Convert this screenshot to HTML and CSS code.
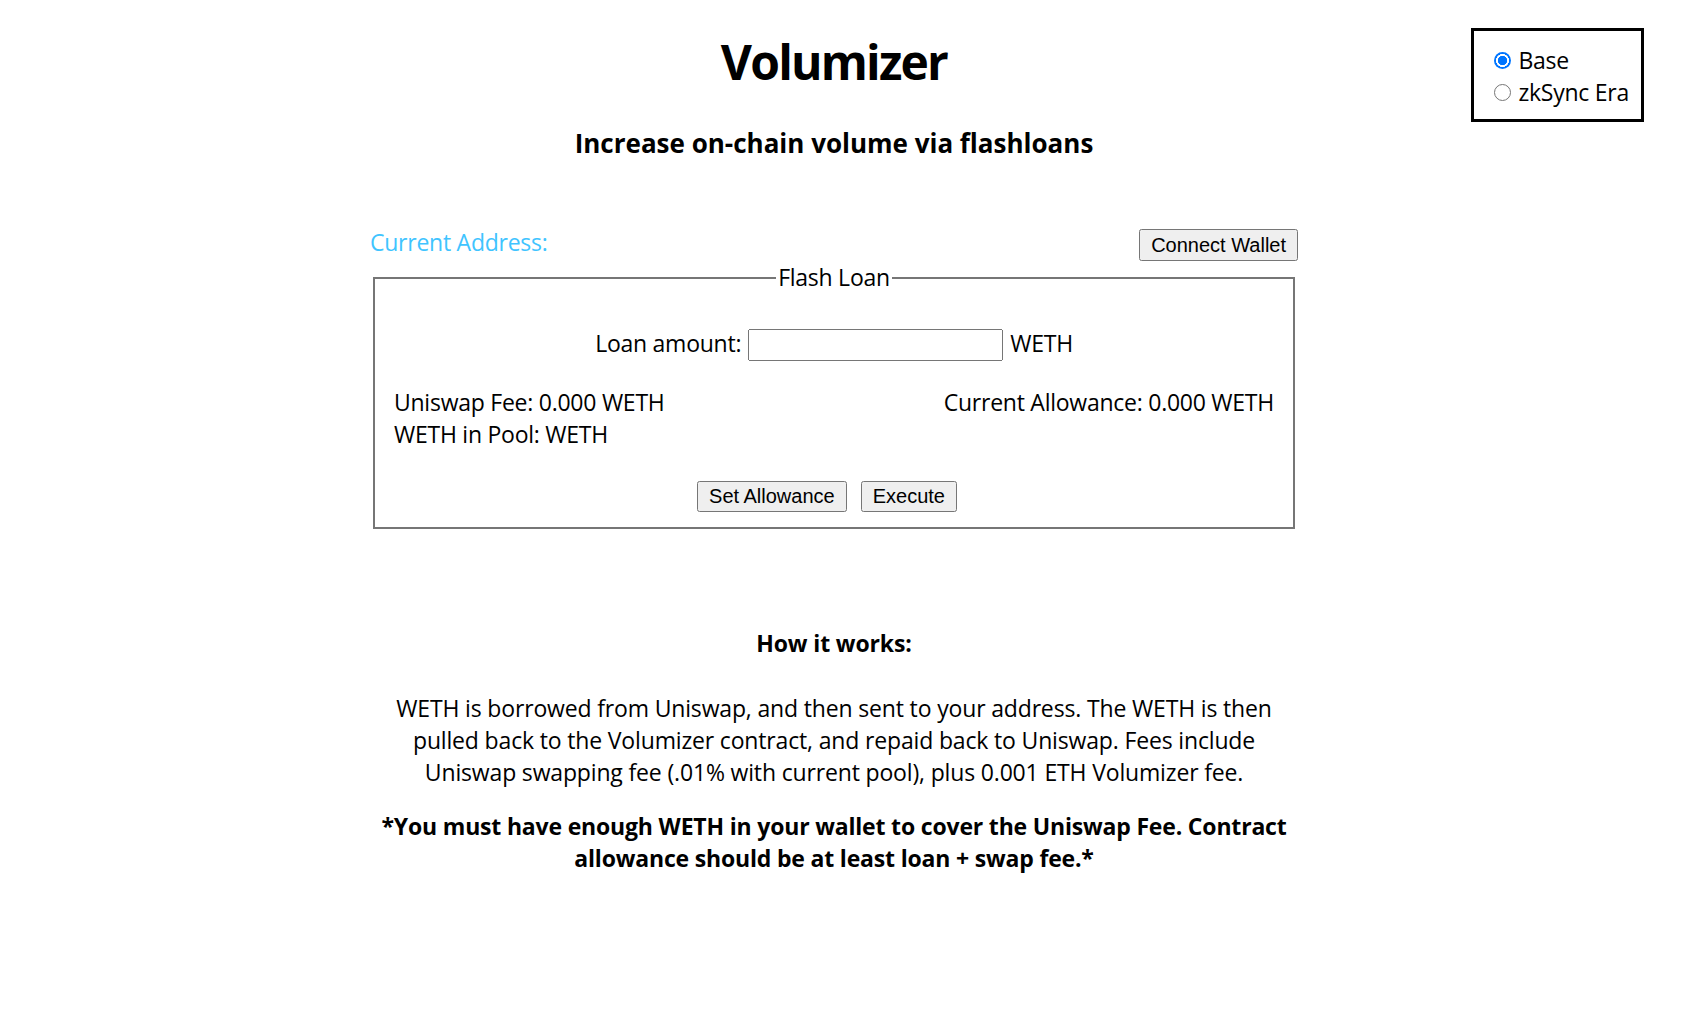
FILE: index.html
```html
<!DOCTYPE html>
<html lang="en">
<head>
<meta charset="utf-8">
<title>Volumizer</title>
<link rel="stylesheet" href="styles.css">
</head>
<body>
<div class="network">
  <label class="net-option"><input class="net-radio" type="radio" name="net" checked>Base</label>
  <label class="net-option"><input class="net-radio" type="radio" name="net">zkSync Era</label>
</div>
<main class="page">
  <h1 class="title">Volumizer</h1>
  <h2 class="subtitle">Increase on-chain volume via flashloans</h2>
  <section class="app">
    <div class="address-row">
      <span class="address">Current Address:</span>
      <button class="btn btn-connect" type="button">Connect Wallet</button>
    </div>
    <fieldset class="loan">
      <legend class="loan-legend">Flash Loan</legend>
      <div class="amount-row">
        <label class="amount-label" for="amt">Loan amount:</label>
        <input id="amt" class="amount-input" type="text">
        <span class="amount-label">WETH</span>
      </div>
      <div class="stats">
        <div class="stats-left">
          <div>Uniswap Fee: 0.000 WETH</div>
          <div>WETH in Pool: WETH</div>
        </div>
        <div class="stats-right">Current Allowance: 0.000 WETH</div>
      </div>
      <div class="actions">
        <button class="btn" type="button">Set Allowance</button>
        <button class="btn" type="button">Execute</button>
      </div>
    </fieldset>
  </section>
  <section class="info">
    <h3 class="info-title">How it works:</h3>
    <p class="info-text">WETH is borrowed from Uniswap, and then sent to your address. The WETH is then<br>pulled back to the Volumizer contract, and repaid back to Uniswap. Fees include<br>Uniswap swapping fee (.01% with current pool), plus 0.001 ETH Volumizer fee.</p>
    <p class="info-note">*You must have enough WETH in your wallet to cover the Uniswap Fee. Contract<br>allowance should be at least loan + swap fee.*</p>
  </section>
</main>
</body>
</html>
```
FILE: styles.css
```css
body {
  margin: 0;
  font-family: "Open Sans", "Noto Sans", sans-serif;
  color: #000;
  background: #fff;
}

.page {
  padding-right: 18px;
  display: flex;
  flex-direction: column;
  align-items: center;
  text-align: center;
}

.title {
  margin: 34px 0 0;
  font-size: 48px;
  line-height: 56px;
  font-weight: 700;
  letter-spacing: -1.8px;
}

.subtitle {
  margin: 36px 0 0;
  font-size: 26px;
  line-height: 34px;
  font-weight: 700;
  letter-spacing: 0;
}

.app {
  width: 928px;
  margin-top: 69px;
}

.address-row {
  display: flex;
  justify-content: space-between;
  align-items: flex-start;
}

.address {
  font-size: 23px;
  line-height: 26px;
  color: #40c4ff;
  letter-spacing: -0.25px;
}

.btn {
  font-family: "Liberation Sans", Arial, sans-serif;
  font-size: 20px;
  height: 31px;
  padding: 0 10px;
  color: #000;
}

.btn-connect {
  height: 32px;
}

.loan {
  margin: 0 3px;
  padding: 34px 19px 15px;
  min-width: 0;
  border: 2px solid #767676;
  font-size: 23px;
  line-height: 32px;
  letter-spacing: -0.25px;
}

.loan-legend {
  margin: 0 auto;
  padding: 0 2px;
  line-height: 33px;
}

.amount-row {
  display: flex;
  justify-content: center;
  align-items: flex-start;
  gap: 7px;
  height: 32px;
  margin-top: 1px;
}

.amount-label {
  line-height: 28px;
}

.amount-input {
  width: 255px;
  height: 32px;
  box-sizing: border-box;
  font-size: 20px;
}

.stats {
  display: flex;
  justify-content: space-between;
  text-align: left;
  margin-top: 25px;
}

.actions {
  margin-top: 31px;
  display: flex;
  justify-content: center;
}

.actions .btn {
  margin: 0 14px 0 0;
}

.info {
  width: 1000px;
  margin-top: 99px;
}

.info-title {
  margin: 0;
  font-size: 23px;
  line-height: 30px;
  font-weight: 700;
  letter-spacing: -0.13px;
}

.info-text {
  margin: 34px 0 0;
  font-size: 23px;
  line-height: 32px;
  letter-spacing: -0.16px;
}

.info-note {
  margin: 22px 0 0;
  font-size: 23px;
  line-height: 32px;
  font-weight: 700;
  letter-spacing: -0.18px;
}

.network {
  position: absolute;
  top: 28px;
  right: 42px;
  border: 3px solid #000;
  padding: 13px 12px 11px 20px;
  font-size: 23px;
  line-height: 32px;
  letter-spacing: -0.25px;
}

.net-option {
  display: flex;
  align-items: center;
}

.net-radio {
  appearance: none;
  -webkit-appearance: none;
  box-sizing: border-box;
  width: 17px;
  height: 17px;
  margin: 0 7px 0 0;
  border: 1px solid #767676;
  border-radius: 50%;
  background: #fff;
}

.net-radio:checked {
  border: none;
  background: radial-gradient(circle closest-side, #0075ff 0 52%, #fff 56% 74%, #0075ff 78%);
}
```
